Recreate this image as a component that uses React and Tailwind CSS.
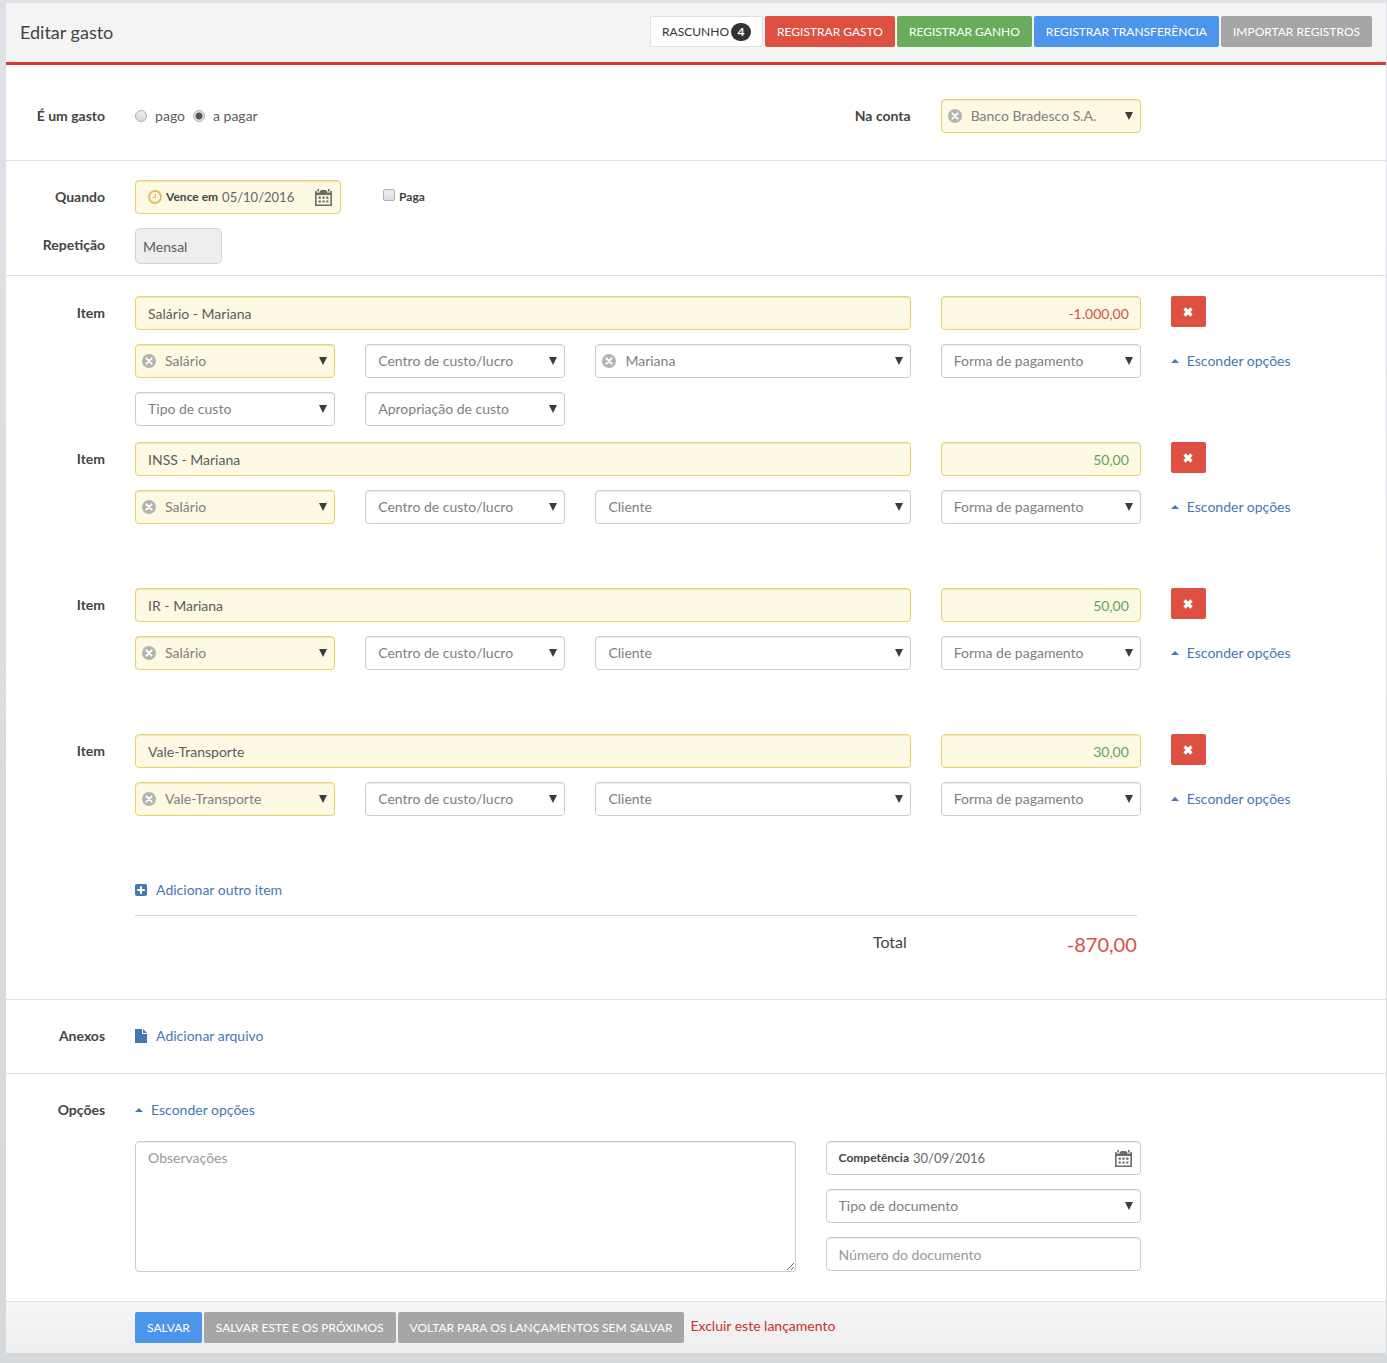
import { useState } from "react";

const GRID = "grid grid-cols-12 gap-x-[30px] pl-[14px] pr-[15px]";

const BOX =
  "h-[34px] w-full rounded-[4px] border text-[14px] shadow-[inset_0_1px_1px_rgba(0,0,0,0.08)]";
const PLAIN = "border-[#ccc] bg-white";
const FILLED = "border-[#ead45c] bg-[#fdf9e3]";

const BUTTON = "h-[31px] rounded-[2px] px-3 text-[12px] whitespace-nowrap";

const initialItems = [
  {
    id: 1,
    name: "Salário - Mariana",
    value: "-1.000,00",
    category: "Salário",
    client: "Mariana",
    extra: true,
  },
  { id: 2, name: "INSS - Mariana", value: "50,00", category: "Salário" },
  { id: 3, name: "IR - Mariana", value: "50,00", category: "Salário" },
  { id: 4, name: "Vale-Transporte", value: "30,00", category: "Vale-Transporte" },
];

const ClearIcon = () => (
  <svg viewBox="0 0 14 14" className="h-[14px] w-[14px]">
    <circle cx="7" cy="7" r="7" fill="#b3b3b0" />
    <path
      d="M4.4 4.4l5.2 5.2M9.6 4.4l-5.2 5.2"
      stroke="#fff"
      strokeWidth="2"
      strokeLinecap="round"
    />
  </svg>
);

const ArrowIcon = () => (
  <svg
    viewBox="0 0 8 8"
    className="pointer-events-none absolute top-[13px] right-[8px] h-[8px] w-[8px]"
  >
    <path d="M0 0h8L4 8z" fill="#3c3c3c" />
  </svg>
);

const CalendarIcon = () => (
  <svg viewBox="0 0 17 17" className="h-[17px] w-[17px]">
    <path
      fill="#6b6b68"
      fillRule="evenodd"
      d="M0 2h1.6v1.4h3.2V2h7.4v1.4h3.2V2H17v15H0zM1.6 6v9.4h13.8V6z"
    />
    <path
      fill="#6b6b68"
      d="M2.4 0h1.6v2.6H2.4zM5.6 1h5.8v1.4H5.6zM13 0h1.6v2.6H13zM3.6 7.6h2.2v2.2H3.6zM7.4 7.6h2.2v2.2H7.4zM11.2 7.6h2.2v2.2h-2.2zM3.6 11.4h2.2v2.2H3.6zM7.4 11.4h2.2v2.2H7.4zM11.2 11.4h2.2v2.2h-2.2z"
    />
  </svg>
);

const ClockIcon = () => (
  <svg viewBox="0 0 14 14" className="h-[14px] w-[14px] shrink-0">
    <circle cx="7" cy="7" r="6" fill="none" stroke="#e9b862" strokeWidth="1.9" />
    <path d="M7.4 3.6v3.9H4.6" fill="none" stroke="#e9b862" strokeWidth="1.2" />
  </svg>
);

const PlusIcon = () => (
  <svg viewBox="0 0 12 12" className="h-[12px] w-[12px]">
    <rect width="12" height="12" rx="2" fill="#4578b0" />
    <path d="M6 2.2v7.6M2.2 6h7.6" stroke="#fff" strokeWidth="2" />
  </svg>
);

const FileIcon = () => (
  <svg viewBox="0 0 12 14" className="h-[14px] w-[12px]">
    <path d="M0 0h7v5h5v9H0z" fill="#4578b0" />
    <path d="M8 0l4 4H8z" fill="#4578b0" />
  </svg>
);

const RemoveIcon = () => (
  <svg viewBox="0 0 10 10" className="h-[10px] w-[10px]">
    <path d="M1.5 1.5l7 7M8.5 1.5l-7 7" stroke="#fff" strokeWidth="3.2" />
  </svg>
);

const Select = ({ label, value, id }) => {
  const [selected, setSelected] = useState(value || "");
  const filled = selected && label !== "Cliente";

  return (
    <div className="relative">
      <select
        id={id}
        aria-label={label}
        value={selected}
        onChange={(e) => setSelected(e.target.value)}
        className={`${BOX} ${filled ? FILLED : PLAIN} appearance-none pr-6 text-[#808080] ${
          selected ? "pl-[29px]" : "pl-3"
        }`}
      >
        <option value="">{label}</option>
        {value && <option value={value}>{value}</option>}
      </select>
      {selected && (
        <button
          type="button"
          aria-label={`Limpar ${label}`}
          onClick={() => setSelected("")}
          className="absolute top-[10px] left-[7px]"
        >
          <ClearIcon />
        </button>
      )}
      <ArrowIcon />
    </div>
  );
};

const DateField = ({ id, label, value, filled, icon }) => (
  <div className={`${BOX} ${filled ? FILLED : PLAIN} flex items-center pr-2 pl-3`}>
    {icon}
    <label
      htmlFor={id}
      className={`text-[12px] font-bold whitespace-nowrap text-[#444] ${icon ? "ml-1" : ""}`}
    >
      {label}
    </label>
    <input
      id={id}
      type="text"
      defaultValue={value}
      className="ml-1 w-0 min-w-0 flex-1 bg-transparent text-[13px] text-[#666] outline-none"
    />
    <button type="button" aria-label="Abrir calendário">
      <CalendarIcon />
    </button>
  </div>
);

const ToggleOptions = () => (
  <a href="#" className="inline-flex h-[34px] items-center gap-2 whitespace-nowrap text-[#4578b0]">
    <svg viewBox="0 0 8 4" className="h-[4px] w-[8px]">
      <path d="M4 0l4 4H0z" fill="#4578b0" />
    </svg>
    Esconder opções
  </a>
);

const Label = ({ htmlFor, children }) => (
  <label
    htmlFor={htmlFor}
    className="flex h-[34px] items-center justify-end font-bold whitespace-nowrap text-[#444]"
  >
    {children}
  </label>
);

const Item = ({ item, onRemove }) => (
  <div className={`${GRID} min-h-[130px] content-start gap-y-[14px]`}>
    <Label htmlFor={`item-${item.id}`}>Item</Label>
    <div className="col-span-7">
      <input
        id={`item-${item.id}`}
        type="text"
        defaultValue={item.name}
        className={`${BOX} ${FILLED} px-3 text-[#5c5c5c]`}
      />
    </div>
    <div className="col-span-2">
      <input
        type="text"
        aria-label="Valor"
        defaultValue={item.value}
        className={`${BOX} ${FILLED} px-[11px] text-right ${
          item.value.startsWith("-") ? "text-[#d4524b]" : "text-[#5fa35f]"
        }`}
      />
    </div>
    <div className="col-span-2">
      <button
        type="button"
        aria-label="Remover item"
        onClick={onRemove}
        className="flex h-[31px] w-[35px] items-center justify-center rounded-[2px] bg-[#de5042]"
      >
        <RemoveIcon />
      </button>
    </div>

    <div className="col-span-2 col-start-2">
      <Select label="Categoria" value={item.category} />
    </div>
    <div className="col-span-2">
      <Select label="Centro de custo/lucro" />
    </div>
    <div className="col-span-3">
      <Select label="Cliente" value={item.client} />
    </div>
    <div className="col-span-2">
      <Select label="Forma de pagamento" />
    </div>
    <div className="col-span-2">
      <ToggleOptions />
    </div>

    {item.extra && (
      <>
        <div className="col-span-2 col-start-2">
          <Select label="Tipo de custo" />
        </div>
        <div className="col-span-2">
          <Select label="Apropriação de custo" />
        </div>
      </>
    )}
  </div>
);

const Radio = ({ label, checked, onChange }) => (
  <label className="flex items-center gap-2 text-[#5c5c5c]">
    <input
      type="radio"
      name="situacao"
      checked={checked}
      onChange={onChange}
      className="h-[12px] w-[12px] appearance-none rounded-full border border-[#b0b0b0] bg-linear-to-b from-[#eee] to-[#d8d8d8] checked:bg-[radial-gradient(circle,#555_3px,#e4e4e4_4px)]"
    />
    {label}
  </label>
);

const App = () => {
  const [items, setItems] = useState(initialItems);
  const [paid, setPaid] = useState(false);

  const removeItem = (id) => {
    setItems(items.filter((item) => item.id !== id));
  };

  return (
    <div className="min-h-screen bg-linear-to-b from-[#dee2e6] to-[#d5d9db] pt-[3px] pr-px pb-[10px] pl-[6px] font-['Lato',sans-serif] text-[14px] leading-5 text-[#444]">
      <form className="bg-white" onSubmit={(e) => e.preventDefault()}>
        <header className="flex items-center justify-between border-b-3 border-[#d23a32] bg-[#f4f4f4] pt-[13px] pr-[14px] pb-[15px] pl-[14px]">
          <h1 className="text-[18px]">Editar gasto</h1>
          <div className="flex gap-[2px]">
            <button
              type="button"
              className="flex h-[31px] items-center gap-[2px] rounded-[2px] border border-[#dbe0e4] bg-white px-[11px] text-[12px] text-[#333]"
            >
              RASCUNHO
              <span className="flex h-[18px] w-[20px] items-center justify-center rounded-full bg-[#333] font-bold text-white">
                4
              </span>
            </button>
            <button type="button" className={`${BUTTON} bg-[#de5042] text-white`}>
              REGISTRAR GASTO
            </button>
            <button type="button" className={`${BUTTON} bg-[#69ad5c] text-white`}>
              REGISTRAR GANHO
            </button>
            <button type="button" className={`${BUTTON} bg-[#4b95ea] text-white`}>
              REGISTRAR TRANSFERÊNCIA
            </button>
            <button type="button" className={`${BUTTON} bg-[#a6a6a6] text-white`}>
              IMPORTAR REGISTROS
            </button>
          </div>
        </header>

        <section className={`${GRID} border-b border-[#e2e2e2] pt-[34px] pb-[27px]`}>
          <span className="flex h-[34px] items-center justify-end font-bold whitespace-nowrap">
            É um gasto
          </span>
          <div className="col-span-6 flex items-center gap-2">
            <Radio label="pago" checked={paid} onChange={() => setPaid(true)} />
            <Radio label="a pagar" checked={!paid} onChange={() => setPaid(false)} />
          </div>
          <Label htmlFor="conta">Na conta</Label>
          <div className="col-span-2">
            <Select id="conta" label="Conta" value="Banco Bradesco S.A." />
          </div>
        </section>

        <section className="flex flex-col gap-[14px] border-b border-[#e2e2e2] pt-[19px] pb-[11px]">
          <div className={GRID}>
            <Label htmlFor="vencimento">Quando</Label>
            <div className="col-span-11 flex items-center gap-[42px]">
              <div className="w-[206px]">
                <DateField
                  id="vencimento"
                  label="Vence em"
                  value="05/10/2016"
                  filled
                  icon={<ClockIcon />}
                />
              </div>
              <label className="flex items-center gap-1 text-[12px] font-bold">
                <input
                  type="checkbox"
                  className="mb-1 h-[12px] w-[12px] appearance-none rounded-[2px] border border-[#b0b0b0] bg-linear-to-b from-[#eee] to-[#dcdcdc] checked:bg-[#555]"
                />
                Paga
              </label>
            </div>
          </div>
          <div className={GRID}>
            <Label htmlFor="repeticao">Repetição</Label>
            <div className="col-span-11">
              <input
                id="repeticao"
                type="text"
                readOnly
                value="Mensal"
                className="block h-[36px] w-[87px] rounded-[5px] border border-[#d4d4d4] bg-[#eee] px-[7px] text-[#5c5c5c]"
              />
            </div>
          </div>
        </section>

        <section className="border-b border-[#e2e2e2] pt-5 pb-[43px]">
          <div className="flex flex-col gap-4">
            {items.map((item) => (
              <Item key={item.id} item={item} onRemove={() => removeItem(item.id)} />
            ))}
          </div>
          <div className={`${GRID} pt-4`}>
            <div className="col-span-9 col-start-2 pr-1">
              <a href="#" className="inline-flex items-center gap-[9px] text-[#4578b0]">
                <PlusIcon />
                Adicionar outro item
              </a>
              <div className="mt-[14px] flex items-start justify-end border-t border-[#cfd3d3] pt-4 pb-[2px]">
                <span className="text-[16px]">Total</span>
                <span className="w-[230px] pt-[2px] text-right text-[20px] text-[#d4524b]">
                  -870,00
                </span>
              </div>
            </div>
          </div>
        </section>

        <section className={`${GRID} border-b border-[#e2e2e2] pt-[19px] pb-5`}>
          <span className="flex h-[34px] items-center justify-end font-bold">Anexos</span>
          <div className="col-span-11 flex items-center">
            <a href="#" className="inline-flex items-center gap-[9px] text-[#4578b0]">
              <FileIcon />
              Adicionar arquivo
            </a>
          </div>
        </section>

        <section className={`${GRID} gap-y-[14px] border-b border-[#e2e2e2] pt-[19px] pb-[29px]`}>
          <span className="flex h-[34px] items-center justify-end font-bold">Opções</span>
          <div className="col-span-11">
            <ToggleOptions />
          </div>
          <div className="col-span-6 col-start-2">
            <textarea
              aria-label="Observações"
              placeholder="Observações"
              className="block h-[131px] w-full rounded-[4px] border border-[#ccc] px-3 py-[6px] text-[14px] leading-5 shadow-[inset_0_1px_1px_rgba(0,0,0,0.08)] placeholder:text-[#999]"
            />
          </div>
          <div className="col-span-3 flex flex-col gap-[14px]">
            <DateField id="competencia" label="Competência" value="30/09/2016" />
            <Select label="Tipo de documento" />
            <input
              type="text"
              aria-label="Número do documento"
              placeholder="Número do documento"
              className={`${BOX} ${PLAIN} px-3 placeholder:text-[#999]`}
            />
          </div>
        </section>

        <footer className={`${GRID} bg-linear-to-b from-[#f5f5f5] to-[#eee] py-[10px]`}>
          <div className="col-span-11 col-start-2 flex items-center">
            <button type="submit" className={`${BUTTON} mr-[2px] bg-[#4b95ea] text-white`}>
              SALVAR
            </button>
            <button type="button" className={`${BUTTON} mr-[2px] bg-[#a6a6a6] text-white`}>
              SALVAR ESTE E OS PRÓXIMOS
            </button>
            <button type="button" className={`${BUTTON} mr-[6px] bg-[#a6a6a6] text-white`}>
              VOLTAR PARA OS LANÇAMENTOS SEM SALVAR
            </button>
            <a href="#" className="pb-[3px] text-[#c9302c]">
              Excluir este lançamento
            </a>
          </div>
        </footer>
      </form>
    </div>
  );
};

export default App;
